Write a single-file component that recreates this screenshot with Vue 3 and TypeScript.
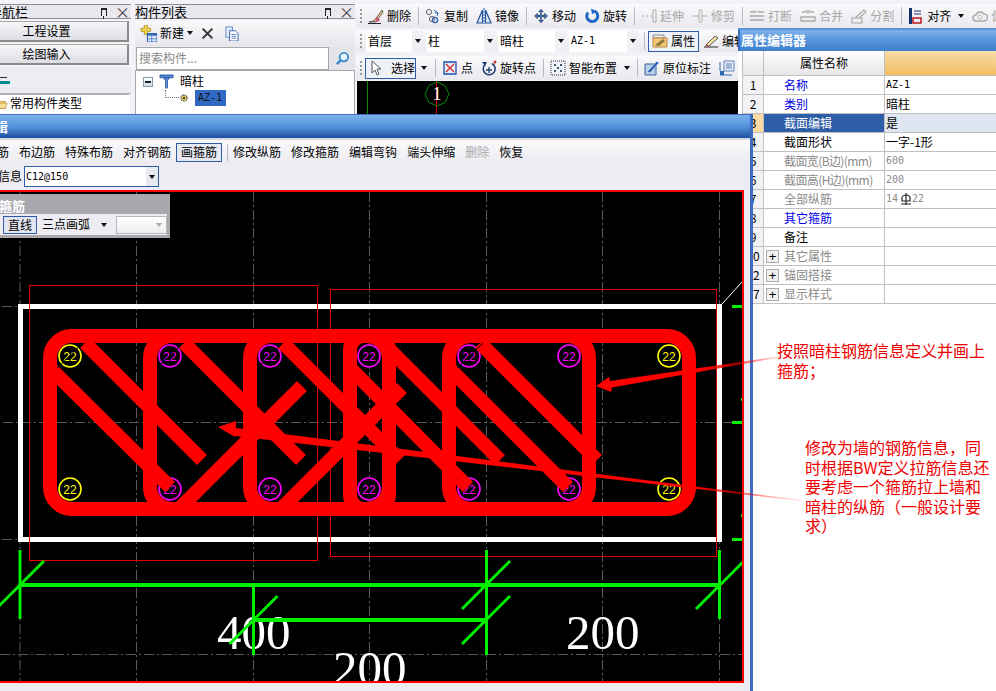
<script setup lang="ts">
const icons: Record<string, string> = {
  brush: '<path d="M1 14 L6 13 L14 2 L15 4 L8 14Z" fill="#e8c98a" stroke="#333" stroke-width=".7"/><path d="M9 9l3 3 -2 2 -3-3z" fill="#d8547a"/><path d="M0 15.500h13" stroke="#223" />',
  copy: '<circle cx="4" cy="4" r="2.600" fill="none" stroke="#667"/><circle cx="10" cy="12" r="2.600" fill="none" stroke="#2a62b0" stroke-width="1.300"/><circle cx="7" cy="11" r="2.600" fill="none" stroke="#667"/><path d="M9 2l4 3 -1 3M13 5h-3" fill="none" stroke="#2a62b0"/>',
  mirror: '<path d="M6.500 2V15H1Z M9.500 2V15H15Z" fill="#dbe8f8" stroke="#24559c" stroke-width="1.200"/><path d="M8 0v16" stroke="#24559c" stroke-dasharray="2 1"/>',
  move: '<path d="M8 1l2.500 3h-2v3h3V5l3 3-3 3V9h-3v3h2L8 15l-2.500-3h2V9h-3v2l-3-3 3-3v2h3V4h-2z" fill="#3c6aa8" stroke="#234" stroke-width=".4"/>',
  rotate: '<path d="M4 4.500A5.500 5.500 0 1 0 10.500 3" fill="none" stroke="#2468c8" stroke-width="3"/><path d="M7 .5l5 2.500-4 3.500z" fill="#2468c8"/>',
  extend: '<path d="M1 8h2M5 8h2M9 8h2M12 2h3v12h-3z" fill="none" stroke="#aaa"/>',
  trim: '<path d="M1 8h14" stroke="#aaa"/><path d="M7 2h3v12H7z" fill="#e8e8e8" stroke="#bbb"/>',
  break: '<path d="M1 4h5M9 4h6M1 12h14M1 8h14" fill="none" stroke="#aaa" stroke-width="1.500"/><path d="M5 2l2 3 2-3" fill="none" stroke="#bbb"/>',
  merge: '<path d="M1 9h14v4H1zM2 4h4M10 4h4M6 2l2 3 2-3" fill="none" stroke="#aaa" stroke-width="1.300"/>',
  split: '<path d="M1 10h10v5H1zM4 10l9-8 2 2-7 6" fill="none" stroke="#aaa" stroke-width="1.200"/>',
  align: '<path d="M1 0h3v16H1z" fill="#14306c"/><path d="M5 10h8v5H5z" fill="none" stroke="#c01818" stroke-width="1.500"/><path d="M6 3h7M6 6h7" stroke="#14306c"/>',
  offset: '<path d="M4 13a3 3 0 0 1 0-6 4.500 4.500 0 0 1 8-1 3.500 3.500 0 0 1 0 7z" fill="none" stroke="#aaa" stroke-width="1.500"/><circle cx="8" cy="9" r="2" fill="none" stroke="#bbb"/>',
  prop: '<path d="M1 2h11v3H1z" fill="#efefef" stroke="#888"/><path d="M1 5h14v9H1z" fill="#f6c778" stroke="#b98a40"/><path d="M3 12l8-6 2 2-6 5z" fill="#8a7a38"/>',
  edit: '<path d="M1 14h14" stroke="#222"/><path d="M3 12l9-9 3 2-9 8z" fill="#f3e0a0" stroke="#333" stroke-width=".8"/><path d="M3 12l3 1-4 1z" fill="#c43"/>',
  cursor: '<path d="M3 1v12l3-3 2 5 2-1-2-5h4z" fill="#fff" stroke="#555"/>',
  point: '<path d="M2 2h12v12H2z" fill="#e8eefc" stroke="#1c4fa8" stroke-width="1.300"/><path d="M4 4l8 8M12 4l-8 8" stroke="#d02828" stroke-width="1.300"/>',
  rotpoint: '<path d="M4 4.500A6 6 0 1 0 11 3.500" fill="none" stroke="#1f3f70" stroke-width="1.600"/><path d="M8 7v6M5 10h6" stroke="#1f3f70" stroke-width="1.300"/><path d="M1 2l5 0 -2 4z" fill="#1f3f70"/><circle cx="14" cy="2" r="1.500" fill="#c33"/>',
  smart: '<path d="M1 1h14v14H1z" fill="#eef2fa" stroke="#333" stroke-dasharray="1 1"/><path d="M4 5h2M10 5h2M5 4v2M11 4v2M4 11h2M10 11h2M5 10v2M11 10v2M7 8h2M8 7v2" stroke="#123"/>',
  origin: '<path d="M1 4h11v11H1z" fill="#b9cfe8" stroke="#36659c"/><path d="M3 12L13 1l2 2L6 13z" fill="#2f64b4" stroke="#fff" stroke-width=".5"/>',
  table: '<path d="M5 1h10v10H5z" fill="#e8eef8" stroke="#5a7fb8"/><path d="M7 4h6M7 6h6M7 8h6" stroke="#5a7fb8"/><path d="M1 11h4v4H1z" fill="#2f64b4"/><path d="M1 2v9M1 15h12" stroke="#2f64b4"/>',
  newItem: '<path d="M1 3h3V0h3v3h3v3H7v3H4V6H1z" fill="#f2d24a" stroke="#a88a20" stroke-width=".7"/><path d="M7 8h9v8H7z" fill="#dce8f8" stroke="#2f64b4"/><path d="M7 8h9v2H7z" fill="#2f64b4"/><path d="M11 10v6M7 13h9" stroke="#2f64b4" stroke-width=".6"/>',
  del: '<path d="M2 2l12 12M14 2L2 14" stroke="#333" stroke-width="2.400"/>',
  docs: '<path d="M2 1h7v11H2z" fill="#e4eefb" stroke="#5a86c4"/><path d="M6 5h6l3 3v8H6z" fill="#fff" stroke="#2f64b4"/><path d="M8 9h5M8 11h5M8 13h5" stroke="#2f64b4" stroke-width=".8"/>',
  search: '<circle cx="9.500" cy="6.500" r="4.500" fill="#e6f4fc" stroke="#3a8cc8" stroke-width="2"/><path d="M6 10l-4 4" stroke="#3a8cc8" stroke-width="2.600"/>',
  column: '<path d="M1 1h14v3H1z" fill="#4f86d8" stroke="#1c4a98" stroke-width=".8"/><path d="M5 4h6l-1 2H9v9H7V6H6z" fill="#5f97e4" stroke="#1c4a98" stroke-width=".8"/>',
  gear: '<circle cx="5" cy="5" r="3" fill="#ffe45a" stroke="#333" stroke-width="1.200" stroke-dasharray="1 .6"/><circle cx="5" cy="5" r="1.200" fill="#333"/>',
  folder: '<path d="M0 3h5l1 2h7v8H0z" fill="#f4d06a" stroke="#a88430" stroke-width=".7"/><path d="M2 7h13l-2 6H0z" fill="#f9e090" stroke="#a88430" stroke-width=".7"/>',
}

interface Tool { icon: string; label?: string; off?: boolean; caret?: boolean; sep?: boolean }
const row1: Tool[] = [
  { icon: 'brush', label: '删除' }, { icon: '', sep: true }, { icon: 'copy', label: '复制' }, { icon: 'mirror', label: '镜像' }, { icon: '', sep: true },
  { icon: 'move', label: '移动' }, { icon: 'rotate', label: '旋转' }, { icon: '', sep: true },
  { icon: 'extend', label: '延伸', off: true }, { icon: 'trim', label: '修剪', off: true }, { icon: '', sep: true },
  { icon: 'break', label: '打断', off: true }, { icon: 'merge', label: '合并', off: true }, { icon: 'split', label: '分割', off: true }, { icon: '', sep: true },
  { icon: 'align', label: '对齐', caret: true }, { icon: 'offset', label: '偏移', off: true },
]
const row3: Tool[] = [
  { icon: 'point', label: '点' }, { icon: 'rotpoint', label: '旋转点' }, { icon: '', sep: true },
  { icon: 'smart', label: '智能布置', caret: true }, { icon: '', sep: true },
  { icon: 'origin', label: '原位标注' }, { icon: 'table', label: '图元柱表' },
]
const combos = [
  { text: '首层', w: 57 }, { text: '柱', w: 69 }, { text: '暗柱', w: 68 }, { text: 'AZ-1', w: 69, mono: true },
]
interface Row { n: number; name: string; tone: string; value?: string; valueTone?: string; mono?: boolean; sel?: boolean; plus?: boolean; rebar?: boolean; tight?: boolean }
const rows: Row[] = [
  { n: 1, name: '名称', tone: 'blue', value: 'AZ-1', mono: true },
  { n: 2, name: '类别', tone: 'blue', value: '暗柱' },
  { n: 3, name: '截面编辑', tone: 'white', value: '是', sel: true },
  { n: 4, name: '截面形状', tone: 'black', value: '一字-1形' },
  { n: 5, name: '截面宽(B边)(mm)', tone: 'grey', value: '600', valueTone: 'grey', mono: true, tight: true },
  { n: 6, name: '截面高(H边)(mm)', tone: 'grey', value: '200', valueTone: 'grey', mono: true, tight: true },
  { n: 7, name: '全部纵筋', tone: 'grey', rebar: true, valueTone: 'grey' },
  { n: 8, name: '其它箍筋', tone: 'blue' },
  { n: 9, name: '备注', tone: 'black' },
  { n: 10, name: '其它属性', tone: 'grey', plus: true },
  { n: 12, name: '锚固搭接', tone: 'grey', plus: true },
  { n: 17, name: '显示样式', tone: 'grey', plus: true },
]
const dlgTools = ['布角筋', '布边筋', '特殊布筋', '对齐钢筋']
const dlgTools2 = [
  { t: '修改纵筋' }, { t: '修改箍筋' }, { t: '编辑弯钩' }, { t: '端头伸缩' }, { t: '删除', off: true }, { t: '恢复' },
]

const gridX = [20, 136.5, 253.5, 369.5, 486.5, 602.5, 719.5]
const rebarX = [70, 170, 270, 369, 469, 569, 669]
const stirrups = [
  { x: 50, w: 639 }, { x: 150, w: 239 }, { x: 250, w: 139 }, { x: 350, w: 39 }, { x: 449, w: 140 },
]
const bars = [
  [85, 343, 202, 460], [50, 368, 170, 487], [184, 343, 301, 460], [302, 386, 180, 508],
  [283, 343, 400, 460], [383, 343, 500, 460], [402, 388, 282, 508], [350, 368, 468, 487],
  [449, 368, 568, 487], [480, 343, 597, 460],
]
const diag = [[20, 585], [486, 585], [720, 585], [253.5, 620], [486, 620]]
const note2 = ['修改为墙的钢筋信息，同', '时根据BW定义拉筋信息还', '要考虑一个箍筋拉上墙和', '暗柱的纵筋（一般设计要', '求）']
</script>

<template>
  <div class="page">
    <section class="nav">
      <header class="phead"><span>模块导航栏</span><i class="pin"></i><i class="cls">×</i></header>
      <button class="navbtn">工程设置</button>
      <button class="navbtn">绘图输入</button>
      <div class="navbar"><span class="teal"></span></div>
      <div class="navtree">
        <div class="nrow"><svg viewBox="0 0 16 16" class="ic14" v-html="icons.folder"></svg>常用构件类型</div>
        <div class="nrow"><svg viewBox="0 0 16 16" class="ic14" v-html="icons.table"></svg>轴网(J)</div>
      </div>
    </section>

    <section class="list">
      <header class="phead"><span>构件列表</span><i class="pin"></i><i class="cls">×</i></header>
      <div class="ltool">
        <svg viewBox="0 0 16 16" class="ic17" v-html="icons.newItem"></svg>
        <span class="lnew">新建</span><b class="caret"></b>
        <svg viewBox="0 0 16 16" class="ic13 ldel" v-html="icons.del"></svg>
        <svg viewBox="0 0 16 16" class="ic15 ldoc" v-html="icons.docs"></svg>
      </div>
      <div class="lsearch">
        <div class="linput">搜索构件...</div>
        <div class="lgo"><svg viewBox="0 0 16 16" class="ic15" v-html="icons.search"></svg></div>
      </div>
      <div class="ltree">
        <div class="tr1"><span class="minus"></span><svg viewBox="0 0 16 16" class="ic15" v-html="icons.column"></svg><span>暗柱</span></div>
        <div class="tr2"><span class="dots"></span><svg viewBox="0 0 10 10" class="ic10" v-html="icons.gear"></svg><span class="selitem">AZ-1</span></div>
      </div>
    </section>

    <section class="main">
      <div class="tb t1">
        <span class="grip"></span>
        <template v-for="(it, i) in row1" :key="i">
          <span v-if="it.sep" class="sep"></span>
          <span v-else class="tool" :class="{ off: it.off }"><svg viewBox="0 0 16 16" class="ic16" v-html="icons[it.icon]"></svg>{{ it.label }}<b v-if="it.caret" class="caret cl"></b></span>
        </template>
      </div>
      <div class="tb t2">
        <span class="grip"></span>
        <span v-for="c in combos" :key="c.text" class="combo" :class="{ mono: c.mono }" :style="{ width: c.w + 'px' }">{{ c.text }}<em><b class="caret"></b></em></span>
        <span class="sep s2"></span>
        <span class="tool pressed"><svg viewBox="0 0 16 16" class="ic16" v-html="icons.prop"></svg>属性</span>
        <span class="tool"><svg viewBox="0 0 16 16" class="ic16" v-html="icons.edit"></svg>编辑构件</span>
      </div>
      <div class="tb t3">
        <span class="grip"></span>
        <span class="tool pressed sel"><svg viewBox="0 0 16 16" class="ic16" v-html="icons.cursor"></svg><span class="pad">选择</span></span>
        <b class="caret c3"></b>
        <span class="sep"></span>
        <template v-for="(it, i) in row3" :key="i">
          <span v-if="it.sep" class="sep"></span>
          <span v-else class="tool"><svg viewBox="0 0 16 16" class="ic16" v-html="icons[it.icon]"></svg>{{ it.label }}<b v-if="it.caret" class="caret cl"></b></span>
        </template>
      </div>
      <div class="topcanvas">
        <svg width="640" height="40" viewBox="356 81 640 40">
          <path d="M367.500 81V114" stroke="#0a8a0a" />
          <path d="M436.500 81V114" stroke="#e00000" />
          <path d="M437 82l8 3.500 4 8.500-4 8.500-8 3.500-8-3.500-4-8.500 4-8.500z" fill="none" stroke="#0a8a0a" />
          <text x="437" y="100" text-anchor="middle" class="one">1</text>
        </svg>
      </div>
    </section>

    <aside class="propwin">
      <div class="ptitle">属性编辑器</div>
      <div class="ptable">
        <div class="pcell phd"></div>
        <div class="pcell phd c">属性名称</div>
        <div class="pcell phv"></div>
        <template v-for="r in rows" :key="r.n">
          <div class="pcell idx" :class="{ isel: r.sel }">{{ r.n }}</div>
          <div class="pcell name" :class="[r.tone, { nsel: r.sel, tight: r.tight }]">
            <span v-if="r.plus" class="plus">+</span>{{ r.name }}
          </div>
          <div class="pcell val" :class="[r.valueTone, { vsel: r.sel, mono: r.mono }]">
            <template v-if="r.rebar"><span class="mono">14</span><svg class="rebar" viewBox="0 0 10 12"><path d="M1 5a4 3 0 0 1 8 0v3H1zM5 0v12M0 11h10" fill="none" stroke="#222" stroke-width="1.200"/></svg><span class="mono">22</span></template>
            <template v-else>{{ r.value }}</template>
          </div>
        </template>
      </div>
    </aside>

    <div class="dialog">
      <div class="dtitle">截面编辑</div>
      <div class="dstrip"></div>
      <div class="dtool">
        <span v-for="t in dlgTools" :key="t">{{ t }}</span>
        <span class="dpress">画箍筋</span>
        <span class="dsep"></span>
        <span v-for="t in dlgTools2" :key="t.t" :class="{ dis: t.off }">{{ t.t }}</span>
      </div>
      <div class="dinfo">
        <span>箍筋信息</span>
        <div class="dcombo"><span>C12@150</span><em><b class="caret"></b></em></div>
      </div>
      <div class="dframe">
        <svg class="draw" width="804" height="489" viewBox="-60 192 804 489">
          <g stroke="#5a5a5a" stroke-width="1" stroke-dasharray="10 3 2 3" fill="none">
            <path v-for="x in gridX" :key="x" :d="`M${x} 192V681`" />
            <path d="M3 422.500H744M2 306.500H18M2 539.500H18M0 654.500H744" />
          </g>
          <rect x="20.500" y="306.500" width="699" height="233" fill="none" stroke="#fff" stroke-width="5" />
          <path d="M722 304L742 282" stroke="#fff" />
          <g fill="#00f000">
            <rect x="732" y="305" width="10" height="3" />
            <rect x="732" y="421" width="10" height="3" />
            <rect x="732" y="538" width="10" height="3" />
            <rect x="741" y="398" width="3" height="3" />
            <rect x="741" y="514" width="3" height="3" />
          </g>
          <rect x="29.500" y="285.500" width="288" height="275" fill="none" stroke="#e00000" />
          <rect x="330.500" y="289.500" width="386" height="267" fill="none" stroke="#e00000" />

          <g fill="none" stroke="#ff0000" stroke-width="14">
            <rect v-for="s in stirrups" :key="s.x" :x="s.x" y="336" :width="s.w" height="173" :rx="s.w < 100 ? 14 : 22" />
          </g>
          <g v-for="(x, i) in rebarX" :key="x" :class="i === 0 || i === 6 ? 'ry' : 'rm'">
            <circle :cx="x" cy="356" r="11" fill="#000" stroke-width="1.600" />
            <circle :cx="x" cy="489" r="11" fill="#000" stroke-width="1.600" />
            <text :x="x" y="360.500" text-anchor="middle" class="rt">22</text>
            <text :x="x" y="493.500" text-anchor="middle" class="rt">22</text>
          </g>
          <g stroke="#ff0000" stroke-width="14">
            <line v-for="(b, i) in bars" :key="i" :x1="b[0]" :y1="b[1]" :x2="b[2]" :y2="b[3]" />
          </g>
          <g stroke="#000" stroke-width="1">
            <path d="M57 368L83 343M157 368L183 343M257 368L283 343M457 368L483 343" />
          </g>

          <text x="217" y="649" class="dim">400</text>
          <text x="566" y="649" class="dim">200</text>
          <text x="333" y="685" class="dim">200</text>
          <g stroke="#00f000" stroke-width="3" fill="none">
            <path d="M20 550V619M486.500 550V655M719.500 550V619M253.500 586V655" />
            <path d="M20 585H720M253.500 620H486.500" stroke-width="4" />
            <path v-for="(d, i) in diag" :key="i" :d="`M${d[0] - 24} ${d[1] + 24}L${d[0] + 24} ${d[1] - 24}`" />
          </g>
        </svg>
        <div class="floatbox">
          <div class="ftitle">画箍筋</div>
          <div class="fbody">
            <span class="fpress">直线</span>
            <span>三点画弧</span>
            <b class="caret fc"></b>
            <span class="fcombo"><b class="caret lt"></b></span>
          </div>
        </div>
      </div>
    </div>

    <svg class="arrows" width="996" height="691" viewBox="0 0 996 691">
      <defs>
        <linearGradient id="f1" gradientUnits="userSpaceOnUse" x1="700" y1="0" x2="785" y2="0">
          <stop offset="0" stop-color="#ff0000" /><stop offset="1" stop-color="#ff0000" stop-opacity=".1" />
        </linearGradient>
        <linearGradient id="f2" gradientUnits="userSpaceOnUse" x1="690" y1="0" x2="802" y2="0">
          <stop offset="0" stop-color="#ff0000" /><stop offset="1" stop-color="#ff0000" stop-opacity=".1" />
        </linearGradient>
      </defs>
      <path d="M596 386L609 377L610 381L785 355.500L785 356.500L612 387.500L611 392Z" fill="url(#f1)" />
      <path d="M218 427L236 421L236 428L802 500L802 501L235 436L235 437Z" fill="url(#f2)" />
    </svg>
    <div class="note n1">按照暗柱钢筋信息定义并画上<br />箍筋；</div>
    <div class="note n2"><div v-for="l in note2" :key="l">{{ l }}</div></div>
  </div>
</template>

<style>
html, body { margin: 0; background: #fff; }
</style>

<style scoped>
* { box-sizing: border-box; }
.page {
  position: relative; width: 996px; height: 691px; overflow: hidden; display: flex; background: #f3f3f7;
  font: 12px/1.2 "Noto Sans CJK SC", "Liberation Sans", sans-serif; color: #000; padding-top: 4px;
}
.mono { font-family: "DejaVu Sans Mono", "Noto Sans CJK SC", monospace; font-size: 10px; }
.nav { width: 168px; margin-left: -37px; margin-right: 4px; flex: none; display: flex; flex-direction: column; }
.list { width: 220px; flex: none; display: flex; flex-direction: column; margin-right: 1px; }
.phead {
  height: 15px; background: #e8e8ee; border-top: 1px solid #8d8d94; border-bottom: 1px solid #8d8d94;
  display: flex; align-items: center; font-size: 13px; position: relative; margin-bottom: 2px;
}
.phead span { flex: 1; white-space: nowrap; }
.pin { width: 6px; height: 8px; border: 1.500px solid #222; border-top-width: 2px; border-bottom: 0; margin-right: 8px; position: relative; }
.pin::after { content: ""; position: absolute; left: 1px; top: 6px; width: 1px; height: 3px; background: #222; }
.cls { font-style: normal; font-size: 15px; width: 12px; color: #444; margin-right: 4px; line-height: 13px; }
.navbtn {
  height: 21px; margin: 0 2px 2px 0; font: inherit; background: linear-gradient(#f6f6f9, #dedee4);
  border: 1px solid #a8a8a8; border-bottom: 2px solid #8a8a8a; border-right: 2px solid #8a8a8a; padding: 0 0 0 2px;
}
.navbar { height: 27px; background: #ecedf2; position: relative; border-bottom: 1px solid #b0b0b0; }
.teal { position: absolute; left: 37px; top: 14px; width: 10px; height: 3px; background: #0a8a8a; box-shadow: -2px -5px 0 -1px #333; }
.navtree { flex: 1; background: #fff; margin-right: 2px; border-left: 1px solid #b0b0b0; border-top: 1px solid #b0b0b0; }
.nrow { height: 17px; display: flex; align-items: center; gap: 2px; padding-left: 30px; white-space: nowrap; }
.ic14 { width: 14px; height: 14px; flex: none; }
.ic17 { width: 17px; height: 17px; flex: none; }
.ic16 { width: 16px; height: 16px; flex: none; }
.ic15 { width: 15px; height: 15px; flex: none; }
.ic13 { width: 13px; height: 13px; flex: none; }
.ic10 { width: 10px; height: 10px; flex: none; }
.ltool { height: 24px; background: linear-gradient(#f9f9fb, #e6e6ec); display: flex; align-items: center; padding-left: 5px; }
.lnew { margin-left: 3px; }
.caret { display: inline-block; width: 0; height: 0; border: 3px solid transparent; border-top: 4px solid #111; border-bottom: 0; }
.ltool .caret { margin-left: 3px; }
.ldel { margin-left: 8px; }
.ldoc { margin-left: 10px; }
.lsearch { height: 25px; display: flex; background: #e8e8ee; padding-top: 2px; }
.linput { width: 193px; margin-left: 1px; height: 23px; background: #fff; border: 1px solid #a8a8a8; color: #8a8a8a; padding: 3px 2px; font-size: 12px; }
.lgo { flex: 1; display: flex; align-items: center; justify-content: center; background: #e4e4ea; }
.ltree { flex: 1; background: #fff; border: 1px solid #a8a8a8; border-bottom: 0; padding: 3px 0 0 7px; }
.tr1 { display: flex; align-items: center; gap: 6px; height: 15px; }
.minus { width: 10px; height: 10px; border: 1px solid #89a; background: linear-gradient(#fff, #cdd); position: relative; }
.minus::after { content: ""; position: absolute; left: 1px; top: 3px; width: 6px; height: 2px; background: #123; }
.tr2 { display: flex; align-items: center; margin: 0 0 0 22px; padding-top: 1px; height: 17px; }
.dots { width: 14px; height: 8px; margin-top: -8px; border-left: 1px dotted #777; border-bottom: 1px dotted #777; flex: none; }
.selitem { margin-left: 6px; background: #316ac5; color: #111; font: 10px "DejaVu Sans Mono", monospace; height: 16px; line-height: 16px; padding: 0 3px; width: 31px; flex: none; }
.main { flex: 1; min-width: 0; display: flex; flex-direction: column; overflow: hidden; }
.tb { display: flex; align-items: center; white-space: nowrap; background: linear-gradient(#fafafc, #e8e8ee); padding-left: 4px; }
.t1 { height: 24px; gap: 8px; margin-bottom: 2px; }
.t2 { height: 22px; margin-bottom: 4px; gap: 3px; }
.t3 { height: 24px; gap: 8px; }
.grip { width: 2px; height: 14px; background: repeating-linear-gradient(#999 0 2px, transparent 2px 4px); flex: none; }
.t1 .grip { margin-right: -2px; }
.t2 .grip { margin-right: 1px; }
.t3 .grip { margin-right: -5px; }
.sep { width: 1px; height: 18px; background: #b8b8c0; margin: 0 -1.500px; flex: none; }
.tool { display: inline-flex; align-items: center; gap: 3px; flex: none; }
.tool.off { color: #a8a8a8; }
.cl { margin-left: 4px; }
.combo { display: flex; align-items: center; height: 21px; background: #fff; padding-left: 2px; justify-content: space-between; flex: none; }
.combo em { width: 11px; height: 21px; background: #f0f0f4; display: flex; align-items: center; justify-content: center; }
.s2 { margin: 0 0 0 3px; }
.pressed { border: 1px solid #2e5ca8; background: #eef1f8; height: 21px; padding: 0 3px; }
.t2 .pressed { width: 51px; margin-right: 1px; }
.sel { width: 51px; }
.pad { margin-left: 3px; }
.c3 { margin: 0 1px 0 -3px; }
.topcanvas { height: 120px; flex: none; background: #000; margin: 1px 0 0 1px; }
.topcanvas svg { display: block; margin-left: -1px; }
.one { fill: #fff; font: 18px "Liberation Serif", serif; }
.propwin { position: absolute; left: 738px; top: 28px; width: 258px; height: 663px; background: #fff; border-top: 2px solid #5a92d8; z-index: 2; }
.ptitle { height: 21px; background: linear-gradient(#7fb2ea, #4f8ed8 60%, #3f7ecb); color: #fff; font-weight: 700; font-size: 13px; line-height: 20px; padding-left: 1px; border-left: 2px solid #3c6cc0; }
.ptable { display: grid; grid-template-columns: 21px 121px 1fr; grid-template-rows: 25px; grid-auto-rows: 19px; margin: 0 -1px 0 4px; border-left: 1px solid #c0c0c0; }
.pcell { border-right: 1px solid #c0c0c0; border-bottom: 1px solid #c0c0c0; display: flex; align-items: center; white-space: nowrap; height: 19px; }
.phd { height: 25px; background: linear-gradient(#fff, #e6e6ea); }
.phv { height: 25px; background: linear-gradient(#f8dca8, #f2bc62); }
.c { justify-content: center; font-size: 12px; }
.idx { justify-content: center; background: #f2f2f4; }
.isel { background: #fcd9a0; }
.name { padding-left: 20px; position: relative; }
.tight { letter-spacing: -.6px; }
.nsel { background: #2f5ea8; color: #fff; }
.vsel { background: #dfe5f1; }
.val { padding-left: 1px; }
.blue { color: #0000e8; }
.grey { color: #8a8a8a; }
.black { color: #000; }
.white { color: #fff; }
.plus { position: absolute; left: 2px; top: 3px; width: 13px; height: 13px; border: 1px solid #aaa; background: #f0f0f0; color: #000; text-align: center; letter-spacing: 0; font: 13px/11px "Liberation Sans", sans-serif; }
.rebar { width: 10px; height: 12px; margin: 0 1px 0 3px; }
.dialog { position: absolute; left: -60px; top: 114px; width: 813px; height: 577px; background: #ececf2; border-top: 1px solid #3c6cc0; border-right: 3px solid #3d6cc0; display: flex; flex-direction: column; z-index: 3; }
.dtitle { height: 23px; flex: none; background: linear-gradient(#7db2ec, #4f8ed8 55%, #1f4fa0); color: #fff; font-weight: 700; font-size: 13px; line-height: 24px; padding-left: 16px; }
.dstrip { height: 2px; flex: none; background: #d8dbe6; }
.dtool { height: 25px; flex: none; display: flex; align-items: center; gap: 10px; padding-left: 33px; white-space: nowrap; background: linear-gradient(#fafafc, #eaeaf0); }
.dpress { border: 1px solid #2e5ca8; background: #e6e8f2; padding: 1px 4px; margin: 0 -5px; height: 19px; }
.dsep { width: 1px; height: 17px; background: #b8b8c0; margin-right: -5px; }
.dis { color: #a8a8a8; }
.dinfo { height: 23px; flex: none; display: flex; align-items: center; gap: 2px; padding-left: 34px; white-space: nowrap; }
.dcombo { width: 135px; height: 21px; border: 1px solid #2e5ca8; background: #fff; display: flex; justify-content: space-between; font: 10px "DejaVu Sans Mono", monospace; align-items: center; padding-left: 1px; }
.dcombo em { width: 12px; height: 19px; background: #e8e8f0; display: flex; align-items: center; justify-content: center; }
.dframe { flex: 1; margin: 2px 6px 8px 0; border-top: 2px solid #ff0000; border-right: 2px solid #ff0000; border-bottom: 2px solid #ff0000; background: #000; position: relative; overflow: hidden; }
.draw { display: block; }
.ry { stroke: #ffff00; }
.rm { stroke: #ff00ff; }
.ry text { fill: #ffff00; stroke: none; }
.rm text { fill: #ff00ff; stroke: none; }
.rt { font: 12px "Liberation Sans", sans-serif; }
.dim { font: 49px "Liberation Serif", serif; fill: #fff; }
.floatbox { position: absolute; left: 20px; top: 2px; width: 210px; height: 44px; border: 3px solid #a8a8ae; background: #ececf2; }
.ftitle { height: 17px; background: #a8a8ae; color: #fff; font-weight: 700; font-size: 13px; line-height: 17px; padding-left: 23px; }
.fbody { display: flex; align-items: center; height: 21px; padding-left: 40px; gap: 5px; white-space: nowrap; }
.fpress { border: 1px solid #2e5ca8; background: #e2e4ee; padding: 0 4px; height: 18px; line-height: 16px; }
.fc { margin: 0 4px 0 6px; }
.fcombo { width: 58px; height: 18px; border: 1px solid #b8b8b8; background: linear-gradient(#fff, #ececf0); display: flex; align-items: center; justify-content: flex-end; padding-right: 4px; }
.lt { border-top-color: #aaa; }
.arrows { position: absolute; left: 0; top: 0; z-index: 4; pointer-events: none; }
.note { position: absolute; color: #f00000; font-size: 16px; line-height: 19.500px; white-space: nowrap; z-index: 5; }
.n1 { left: 777px; top: 341px; }
.n2 { left: 805px; top: 438px; }
</style>
